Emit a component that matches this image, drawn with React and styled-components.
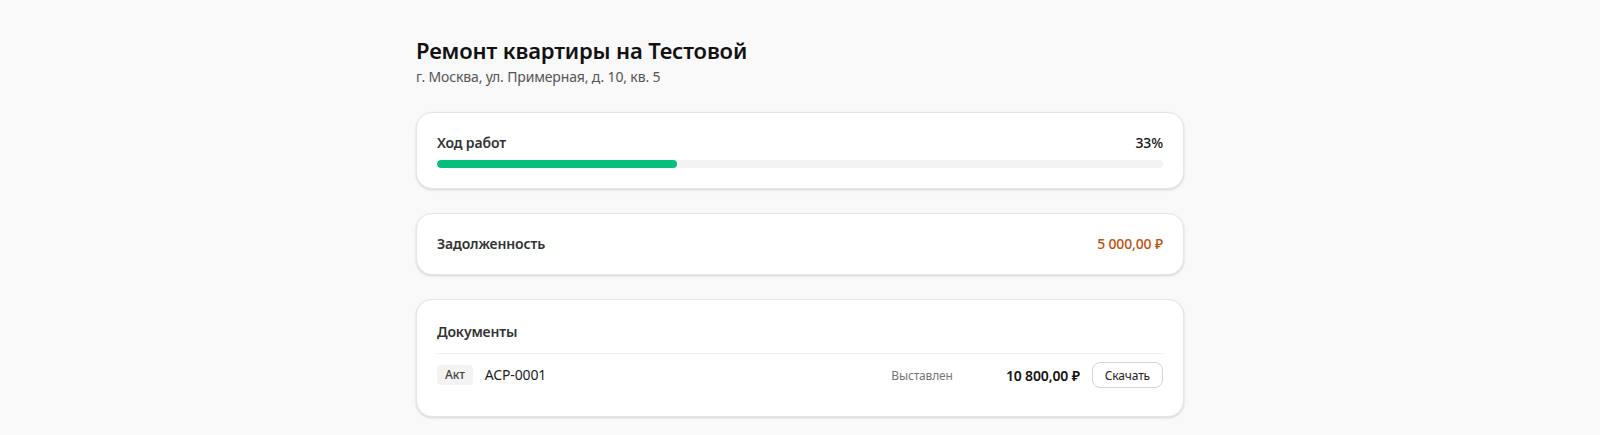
import React from 'react'
import styled, {createGlobalStyle} from 'styled-components'

const GlobalStyle = createGlobalStyle`
    body{
        margin: 0;
        background: #f9f9f9;
        font-family: "Noto Sans", "Open Sans", sans-serif;
        color: #1a1a1a;
        letter-spacing: -0.15px;
    }
`

const Page = styled.div`
    max-width: 768px;
    margin: 0 auto;
    padding: 34px 0 24px;
`

const Title = styled.h1`
    margin: 0;
    font-size: 22px;
    line-height: 32px;
    font-weight: 600;
    color: #111;
`

const Address = styled.p`
    margin: 1px 0 25px;
    font-size: 14px;
    line-height: 20px;
    color: #555;
`

const Stack = styled.div`
    display: flex;
    flex-direction: column;
    gap: 24px;
`

const Card = styled.section`
    background: #fff;
    border: 1px solid #e6e6e6;
    border-radius: 16px;
    padding: 20px;
    box-shadow: 0 1px 3px rgba(0,0,0,0.1), 0 1px 2px rgba(0,0,0,0.06);
`

const Row = styled.div`
    display: flex;
    align-items: center;
    justify-content: space-between;
    margin-bottom: ${p => p.spaced ? '7px' : '0'};
`

const Label = styled.span`
    font-size: 14px;
    line-height: 20px;
    font-weight: 600;
    color: #333;
`

const Value = styled.span`
    font-size: 14px;
    line-height: 20px;
    font-weight: ${p => p.bold ? 600 : 500};
    color: ${p => p.color || '#111'};
`

const Track = styled.div`
    height: 8px;
    border-radius: 4px;
    background: #f3f3f3;
    overflow: hidden;
`

const Fill = styled.div`
    height: 100%;
    border-radius: 4px;
    background: #05bf7d;
`

const DocsHeader = styled.div`
    padding-bottom: 11px;
    border-bottom: 1px solid #efefef;
`

const DocRow = styled.div`
    display: flex;
    align-items: center;
    gap: 12px;
    padding: 8px 0;
`

const Badge = styled.span`
    font-size: 12px;
    line-height: 20px;
    font-weight: 500;
    color: #444;
    background: #f3f3f3;
    border-radius: 4px;
    padding: 0 8px;
`

const DocNumber = styled.span`
    flex: 1;
    font-size: 14px;
    line-height: 20px;
    color: #222;
`

const Status = styled.span`
    font-size: 12px;
    color: #777;
`

const Amount = styled.span`
    min-width: 115px;
    text-align: right;
    font-size: 14px;
    font-weight: 600;
    color: #111;
`

const Button = styled.button`
    height: 26px;
    padding: 0 12px;
    font-family: inherit;
    font-size: 12px;
    letter-spacing: inherit;
    color: #222;
    background: #fff;
    border: 1px solid #d6d6d6;
    border-radius: 8px;
    cursor: pointer;
`

const App = () => {
    const progress = 33
    return (
        <>
            <GlobalStyle/>
            <Page>
                <Title>Ремонт квартиры на Тестовой</Title>
                <Address>г. Москва, ул. Примерная, д. 10, кв. 5</Address>
                <Stack>
                    <Card>
                        <Row spaced>
                            <Label>Ход работ</Label>
                            <Value>{progress}%</Value>
                        </Row>
                        <Track>
                            <Fill style={{width: `${progress}%`}}/>
                        </Track>
                    </Card>

                    <Card>
                        <Row>
                            <Label>Задолженность</Label>
                            <Value color='#c2500a'>5 000,00 ₽</Value>
                        </Row>
                    </Card>

                    <Card>
                        <DocsHeader>
                            <Label>Документы</Label>
                        </DocsHeader>
                        <DocRow>
                            <Badge>Акт</Badge>
                            <DocNumber>ACP-0001</DocNumber>
                            <Status>Выставлен</Status>
                            <Amount>10 800,00 ₽</Amount>
                            <Button>Скачать</Button>
                        </DocRow>
                    </Card>
                </Stack>
            </Page>
        </>
    )
}

export default App
